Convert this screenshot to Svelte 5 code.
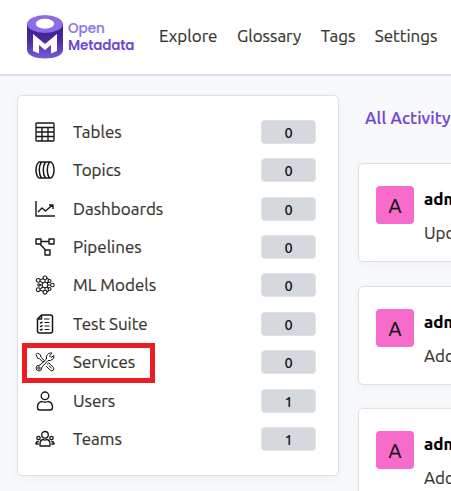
<script>
  const navigation = ['Explore', 'Glossary', 'Tags', 'Settings'];
  const assets = [
    { name: 'Tables', count: 0, icon: 'table' },
    { name: 'Topics', count: 0, icon: 'topic' },
    { name: 'Dashboards', count: 0, icon: 'chart' },
    { name: 'Pipelines', count: 0, icon: 'pipeline' },
    { name: 'ML Models', count: 0, icon: 'model' },
    { name: 'Test Suite', count: 0, icon: 'test' },
    { name: 'Services', count: 0, icon: 'service' },
    { name: 'Users', count: 1, icon: 'user' },
    { name: 'Teams', count: 1, icon: 'team' }
  ];
  const activities = ['Upd', 'Add', 'Add'];
</script>

<div class="app">
  <header>
    <div class="logo">
      <svg width="36" height="44" viewBox="0 0 36 44">
        <defs>
          <linearGradient id="side" x1="0" y1="0" x2="0" y2="1">
            <stop offset="0" stop-color="#392087" />
            <stop offset=".45" stop-color="#47299c" />
            <stop offset="1" stop-color="#7a5bd8" />
          </linearGradient>
        </defs>
        <path d="M0 9V35C0 40 8 43.5 18 43.5S36 40 36 35V9Z" fill="url(#side)" />
        <ellipse cx="18" cy="9" rx="18" ry="9" fill="#8d6ce8" />
        <ellipse cx="18" cy="8.7" rx="9.2" ry="5" fill="#fff" />
        <path d="M6 19L18 29L30 19V36L24 38.5V30L18 35L12 30V38.5L6 36Z" fill="#fff" />
      </svg>
      <div class="brand"><span class="open">Open</span><span class="meta">Metadata</span></div>
    </div>
    <nav>{#each navigation as item}<a>{item}</a>{/each}</nav>
  </header>

  <main>
    <aside>
      {#each assets as asset}
        <div class="row">
          <svg class="icon" viewBox="0 0 20 20" width="20" height="20">
            {#if asset.icon === 'table'}
              <rect x="1" y="1" width="18" height="18" rx="1" />
              <path d="M1 5.5H19M1 10H19M1 14.5H19M7 5.5V19M13 5.5V19" />
            {:else if asset.icon === 'topic'}
              <path d="M4 2H16C20 5 20 15 16 18H4C0 15 0 5 4 2ZM6.5 2C3.5 6 3.5 14 6.5 18M10.5 2C7.5 6 7.5 14 10.5 18M14.5 2C11.5 6 11.5 14 14.5 18" stroke-width="1.5" />
            {:else if asset.icon === 'chart'}
              <path d="M1 2V17H20M3 13L7 9L10.5 12L17.5 6M14 6H18V10" stroke-width="1.4" />
            {:else if asset.icon === 'pipeline'}
              <path d="M1 2H6V7H1ZM14 2H19V7H14ZM10 13H15V18H10ZM6 4.5H14M5 7L10.5 13" stroke-width="1.4" />
            {:else if asset.icon === 'model'}
              <g stroke-width="1.05">
                <path d="M10 5V7M5.3 6.2L8 8M5.3 13.8L8 12M10 13V15M12.2 8.2L14 6M12.2 11.8L14 14M13 10H15.7M4 10H7M5 5L8.3 3.5M11.8 3L14 4.5M11.8 17L14 15.5M5 15L8.3 16.5" />
                <circle cx="10" cy="10" r="2.8" />
                <circle cx="10" cy="2.8" r="1.9" /><circle cx="10" cy="17.2" r="1.9" />
                <circle cx="3.2" cy="5.3" r="1.9" /><circle cx="3.2" cy="14.7" r="1.9" />
                <circle cx="4" cy="10" r="1.3" />
                <circle cx="14.5" cy="6" r="1.5" /><circle cx="14.5" cy="14" r="1.5" />
                <circle cx="17.4" cy="10" r="1.8" />
              </g>
            {:else if asset.icon === 'test'}
              <path d="M6.5 1H15.5Q17.5 1 17.5 3V17Q17.5 19 15.5 19H4.5Q2.5 19 2.5 17V5ZM6.5 1V5H2.5" stroke-width="1.5" />
              <path d="M9 5H14.5M9.5 8.5H14.5M9.5 12H14.5M9.5 15.5H14.5M5 8.5L6 9.2L7.5 7.8M5 12L6 12.7L7.5 11.3M5 15.5L6 16.2L7.5 14.8" stroke-width="1.2" />
            {:else if asset.icon === 'service'}
              <g stroke-width="1">
                <path d="M1 2.5L2.5 1L5.7 3V5L9.5 8.8L8 10.3L4.3 6.5H2.8L1 2.5ZM12 12.5L13.8 10.8L18.2 15.2Q19.5 17 18.3 18.3Q17 19.5 15.3 18.2L11 14" />
                <path d="M4 19Q1 18.5 1 16Q1 13 5 13L11.5 7V4.2Q13 .5 17 1L14.5 4L16 5.5L19 3.5Q20 7 15.5 8.5H13L7 15Q7 19 4 19Z" />
                <circle cx="4" cy="16" r="1.2" />
                <path d="M13.8 13.5L16.5 16.2" />
              </g>
            {:else if asset.icon === 'user'}
              <circle cx="10" cy="4.8" r="3.8" />
              <path d="M7 10.5Q10 12 13 10.5Q17.5 11 17.5 16.5Q17.5 19 15 19H5Q2.5 19 2.5 16.5Q2.5 11 7 10.5Z" />
            {:else}
              <circle cx="10" cy="5.8" r="3.3" />
              <circle cx="3.5" cy="9" r="1.7" /><circle cx="16.5" cy="9" r="1.7" />
              <path d="M8 10.5Q10 11.5 12 10.5Q15 11 15 15V17H5V15Q5 11 8 10.5ZM3.7 12.5Q1 12.5 1 15H3.7M16.3 12.5Q19 12.5 19 15H16.3" />
            {/if}
          </svg>
          <span class="label">{asset.name}</span>
          <span class="count">{asset.count}</span>
          {#if asset.name === 'Services'}<div class="highlight"></div>{/if}
        </div>
      {/each}
    </aside>

    <section>
      <h2>All Activity</h2>
      {#each activities as activity}
        <article>
          <div class="avatar">A</div>
          <div class="post"><strong>adm</strong><p>{activity}</p></div>
        </article>
      {/each}
    </section>
  </main>
</div>

<style>
  :global(body) { margin: 0; overflow: hidden; }
  .app { width: 451px; height: 491px; overflow: hidden; background: #f8f9fb; color: #37352f; font: 17px "Ubuntu", "Noto Sans", sans-serif; -webkit-text-stroke: .2px currentColor; }
  header { box-sizing: border-box; height: 76px; display: flex; background: #fff; border-bottom: 2px solid #dde0ec; }
  .logo { display: flex; width: 159px; padding: 15px 0 0 27px; box-sizing: border-box; flex: none; }
  .logo svg { flex: none; }
  .brand { display: flex; flex-direction: column; padding: 5px 0 0 5px; font: 500 13.5px/17px "Poppins", "Noto Sans", sans-serif; color: #7147d0; }
  .open { color: #9275e8; }
  .meta { font-weight: 600; font-size: 13.5px; letter-spacing: -.15px; -webkit-text-stroke: 0; }
  nav { display: flex; gap: 19.5px; padding-top: 25px; line-height: 22px; white-space: nowrap; }
  nav a { flex: none; }
  main { display: flex; align-items: flex-start; padding: 19px 0 0 17px; }
  aside, article { background: #fff; border: 1px solid #dde0e6; border-radius: 5px; box-shadow: 0 2px 8px #2631440b; box-sizing: border-box; }
  aside { width: 322px; height: 381px; padding: 16.8px 22px 0 17px; flex: none; }
  .row { height: 38.38px; display: flex; align-items: center; position: relative; }
  .icon { flex: none; fill: none; stroke: #171717; stroke-width: 1.35; stroke-linejoin: round; }
  .label { margin-left: 18px; flex: 1; line-height: 22px; white-space: nowrap; }
  .count { box-sizing: border-box; width: 55px; height: 24px; border: 1px solid #dfe2e7; border-radius: 4px; background: #d5d8dd; color: #111; text-align: center; font-size: 14.5px; font-weight: 500; line-height: 23px; -webkit-text-stroke: 0; }
  .highlight { position: absolute; left: -13px; top: 0; width: 133px; height: 40px; box-sizing: border-box; border: 5px solid #ec1c24; }
  section { width: 93px; flex: none; margin-left: 19px; }
  h2 { margin: 12px 0 34px 7px; font-size: 17px; line-height: 22px; font-weight: 500; letter-spacing: .12px; color: #7147d0; white-space: nowrap; }
  article { width: 170px; height: 99px; margin-bottom: 23.5px; padding: 22px 0 0 17px; display: flex; }
  .avatar { width: 38px; height: 38px; flex: none; border-radius: 4px; background: #f76bca; color: #111; text-align: center; font-size: 20px; line-height: 39px; }
  .post { margin-left: 10px; }
  strong { display: block; line-height: 26px; font-weight: 700; color: #000; }
  p { margin: 8px 0 0; line-height: 26px; }
</style>
